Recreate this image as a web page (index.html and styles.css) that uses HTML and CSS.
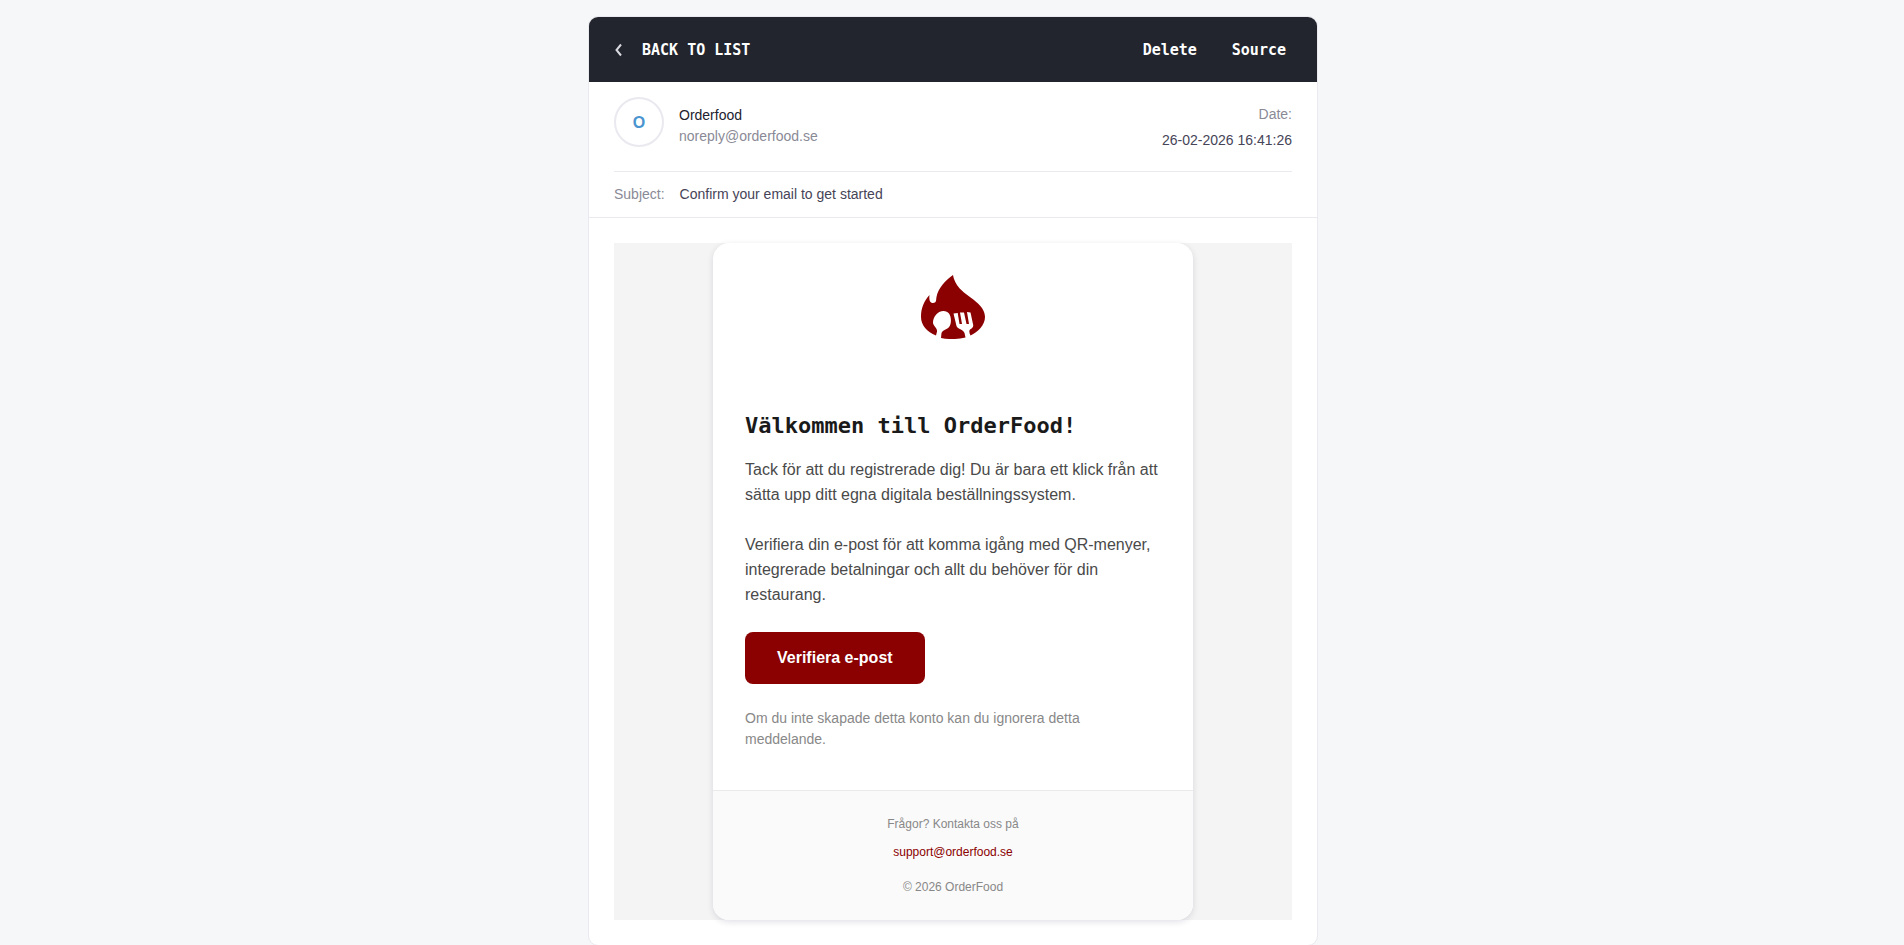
FILE: index.html
```html
<!DOCTYPE html>
<html lang="sv">
<head>
    <meta charset="UTF-8">
    <meta name="viewport" content="width=device-width, initial-scale=1.0">
    <title>Confirm your email to get started</title>
    <link rel="stylesheet" href="styles.css">
</head>
<body>
    <main class="mail-box">
        <header class="toolbar">
            <a href="#" class="back">
                <svg width="7" height="14" viewBox="0 0 7 14" aria-hidden="true"><path d="M6 1.500 1.500 7 6 12.500" fill="none" stroke="#d9d9e0" stroke-width="2"/></svg>
                <span>BACK TO LIST</span>
            </a>
            <nav class="actions">
                <button type="button">Delete</button>
                <button type="button">Source</button>
            </nav>
        </header>

        <section class="mail-info">
            <div class="sender-row">
                <div class="avatar">O</div>
                <div class="sender">
                    <div class="name">Orderfood</div>
                    <div class="muted">noreply@orderfood.se</div>
                </div>
                <div class="date">
                    <div class="muted">Date:</div>
                    <div>26-02-2026 16:41:26</div>
                </div>
            </div>
            <div class="subject-row">
                <span class="muted">Subject:</span>
                <span>Confirm your email to get started</span>
            </div>
        </section>

        <section class="mail-content">
            <div class="mail-bg">
                <article class="card">
                    <div class="logo">
                        <svg width="64" height="64" viewBox="0 0 64 64" role="img" aria-label="OrderFood">
                            <path fill="#8b0000" d="M32 0C32.500 4 35 9.500 38.700 13.500C44 19 51 23 57 28.500C61 32 64 37 64 42C64 50 57 57 49.500 60.500C48 58 48 55.500 49 54.500C51 53.500 52.500 52 52.200 50L49.500 37.500L46 37L48 49H45.500L43 37.500H39L41 49H38.500L36.700 38L32.500 38.500L35.500 51C37 54.500 42 54 43.500 58L44.500 62.500C36 64.500 28 64.500 20 63L20.500 58C22 54 28 55 29.500 49C31 42 28.500 36 22.500 36C16.500 36 12 42 12 47.500C12 51 16.500 53 16 56.500L15 60.500C6 57 0 50 0 42C0 33 3 26 8.500 20C8 24 8.500 28 12 28C15.500 28 15 25 15.500 22C17 13 25 5 32 0Z"/>
                        </svg>
                    </div>
                    <div class="card-body">
                        <h1>Välkommen till OrderFood!</h1>
                        <p>Tack för att du registrerade dig! Du är bara ett klick från att sätta upp ditt egna digitala beställningssystem.</p>
                        <p>Verifiera din e-post för att komma igång med QR-menyer, integrerade betalningar och allt du behöver för din restaurang.</p>
                        <a href="#" class="verify">Verifiera e-post</a>
                        <p class="note">Om du inte skapade detta konto kan du ignorera detta meddelande.</p>
                    </div>
                    <footer class="card-footer">
                        <p>Frågor? Kontakta oss på</p>
                        <a href="mailto:support@orderfood.se">support@orderfood.se</a>
                        <p class="copyright">© 2026 OrderFood</p>
                    </footer>
                </article>
            </div>
        </section>
    </main>
</body>
</html>
```
FILE: styles.css
```css
* { box-sizing: border-box; }
body { margin: 0; padding: 16px 14px 16px 16px; background: #f6f7f9; font-family: Arial, "Liberation Sans", sans-serif; font-size: 14px; line-height: 21px; color: #464457; }
p, h1 { margin: 0; }
a { text-decoration: none; }
.muted { color: #8a8a96; }

.mail-box { max-width: 730px; margin: 0 auto; background: #fff; border: 1px solid #e9e9ef; border-radius: 10px; overflow: hidden; }

.toolbar { display: flex; justify-content: space-between; align-items: center; height: 65px; padding: 0 31px 0 26px; background: #22252d; }
.back, .actions button { font-family: "DejaVu Sans Mono", monospace; font-size: 15px; font-weight: bold; line-height: 24px; color: #fff; }
.back { display: flex; align-items: center; gap: 20px; }
.actions { display: flex; gap: 35px; }
.actions button { padding: 0; border: none; background: none; cursor: pointer; }

.mail-info { border-bottom: 1px solid #e9e9ef; }
.sender-row { display: flex; gap: 15px; margin: 0 25px; padding: 15px 0 18px; border-bottom: 1px solid #e9e9ef; }
.avatar { display: flex; align-items: center; justify-content: center; width: 50px; height: 50px; border: 2px solid #e9e9ef; border-radius: 50%; font-size: 16px; font-weight: bold; color: #4a94cf; }
.sender { flex: 1; padding-top: 8px; }
.name { color: #22222e; }
.date { text-align: right; line-height: 26px; padding-top: 4px; }
.subject-row { display: flex; gap: 15px; padding: 12px 25px; }

.mail-content { padding: 25px; }
.mail-bg { background: #f4f4f4; }
.card { max-width: 480px; margin: 0 auto; background: #fff; border-radius: 16px; box-shadow: 0 2px 6px rgba(40, 40, 90, 0.14); overflow: hidden; }
.logo { display: flex; justify-content: center; padding: 32px; }
.card-body { padding: 39px 32px 40px; }
.card-body h1 { margin-bottom: 15px; font-family: "DejaVu Sans Mono", monospace; font-size: 22px; line-height: 32px; color: #1a1a1a; }
.card-body p { margin-bottom: 25px; font-size: 16px; line-height: 25px; color: #4a4a4a; }
.verify { display: inline-block; padding: 14px 32px; border-radius: 8px; background: #8b0000; font-size: 16px; font-weight: bold; line-height: 24px; color: #fff; }
.card-body .note { margin: 24px 0 0; font-size: 14px; line-height: 21px; color: #888; }
.card-footer { padding: 24px 32px; border-top: 1px solid #eaeaea; background: #fafafa; font-size: 12px; line-height: 18px; text-align: center; color: #888; }
.card-footer a { display: block; margin-top: 10px; color: #8b0000; }
.copyright { margin-top: 17px; }
```
